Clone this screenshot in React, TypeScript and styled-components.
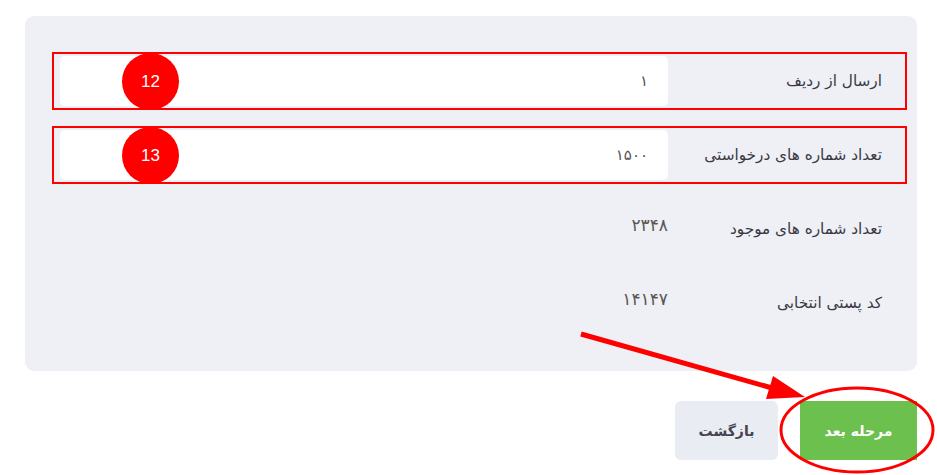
import React from 'react';
import styled, { createGlobalStyle } from 'styled-components';

const GlobalStyle = createGlobalStyle`
  body {
    margin: 0;
    background: #ffffff;
    font-family: "DejaVu Sans", "Noto Sans", sans-serif;
  }
`;

const Page = styled.div`
  position: relative;
  width: 937px;
  height: 475px;
  box-sizing: border-box;
  padding: 16px 20px 0 25px;
  direction: rtl;
  overflow: hidden;
`;

const Panel = styled.div`
  display: flex;
  flex-direction: column;
  gap: 16px;
  padding: 36px 10px 39px 27px;
  background: #eff0f6;
  border-radius: 9px;
`;

const Row = styled.div<{ $marked?: boolean }>`
  position: relative;
  display: flex;
  align-items: center;
  height: 58px;
  box-sizing: border-box;
  padding: 2px 0 2px 6px;
  border: 2px solid ${p => (p.$marked ? '#ff0000' : 'transparent')};
`;

const Label = styled.div`
  flex: 0 0 237px;
  box-sizing: border-box;
  padding-right: 23px;
  font-size: 15.3px;
  color: #393944;
  white-space: nowrap;
`;

const Field = styled.div`
  flex: 1;
  height: 50px;
  display: flex;
  align-items: center;
  padding-right: 20px;
  background: #ffffff;
  border-radius: 5px;
  font-size: 15px;
  color: #55525a;
`;

const Value = styled.div`
  flex: 1;
  align-self: flex-start;
  padding-top: 11px;
  font-size: 17px;
  color: #5b5652;
`;

const Badge = styled.div`
  position: absolute;
  left: 68px;
  top: -1px;
  width: 57px;
  height: 57px;
  border-radius: 50%;
  background: #ff0000;
  color: #ffffff;
  display: flex;
  align-items: center;
  justify-content: center;
  font-family: "Liberation Sans", Arial, sans-serif;
  font-size: 17px;
  direction: ltr;
`;

const Actions = styled.div`
  display: flex;
  gap: 22px;
  margin-top: 30px;
`;

const Button = styled.button<{ $primary?: boolean }>`
  height: 59px;
  width: ${p => (p.$primary ? '117px' : '103px')};
  border: none;
  border-radius: ${p => (p.$primary ? '0' : '6px')};
  background: ${p => (p.$primary ? '#6cc04e' : '#eaecf3')};
  color: ${p => (p.$primary ? '#ffffff' : '#44444e')};
  font-family: "DejaVu Sans", sans-serif;
  font-size: 14px;
  font-weight: bold;
  direction: rtl;
`;

const Overlay = styled.svg`
  position: absolute;
  left: 0;
  top: 0;
  pointer-events: none;
`;

const fields = [
  { label: 'ارسال از ردیف', value: '۱', badge: '12' },
  { label: 'تعداد شماره های درخواستی', value: '۱۵۰۰', badge: '13' },
];

const infos = [
  { label: 'تعداد شماره های موجود', value: '۲۳۴۸' },
  { label: 'کد پستی انتخابی', value: '۱۴۱۴۷' },
];

const App = () => {
  return (
    <Page>
      <GlobalStyle />
      <Panel>
        {fields.map(f => (
          <Row key={f.label} $marked>
            <Label>{f.label}</Label>
            <Field>{f.value}</Field>
            <Badge>{f.badge}</Badge>
          </Row>
        ))}
        {infos.map(i => (
          <Row key={i.label}>
            <Label>{i.label}</Label>
            <Value>{i.value}</Value>
          </Row>
        ))}
      </Panel>

      <Actions>
        <Button $primary>مرحله بعد</Button>
        <Button>بازگشت</Button>
      </Actions>

      <Overlay width="937" height="475" viewBox="0 0 937 475">
        <line x1="581" y1="334" x2="772" y2="388" stroke="#ff0000" strokeWidth="5" />
        <polygon points="805,397 766,399 773,376" fill="#ff0000" />
        <ellipse cx="857" cy="430" rx="76" ry="42" fill="none" stroke="#ff0000" strokeWidth="3" />
      </Overlay>
    </Page>
  );
};

export default App;
